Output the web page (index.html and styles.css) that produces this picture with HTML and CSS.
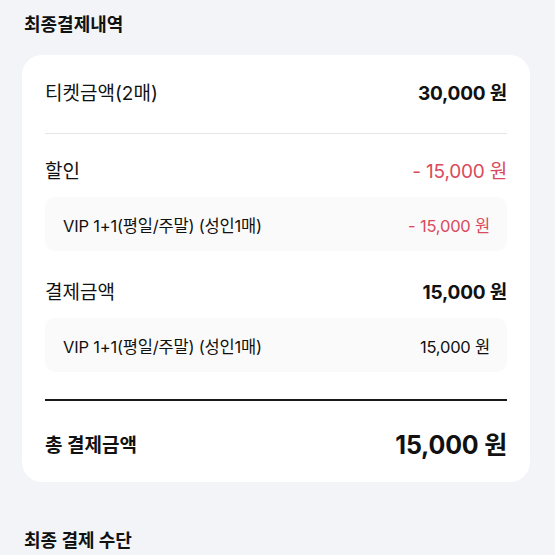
FILE: index.html
```html
<!DOCTYPE html>
<html lang="ko">
<head>
<meta charset="utf-8">
<link rel="stylesheet" href="styles.css">
</head>
<body>
<div class="page">
  <h2 class="section-title">최종결제내역</h2>
  <div class="card">
    <div class="row first">
      <span class="label">티켓금액(2매)</span>
      <span class="amount bold">30,000 원</span>
    </div>
    <div class="divider"></div>
    <div class="row">
      <span class="label">할인</span>
      <span class="amount red">- 15,000 원</span>
    </div>
    <div class="sub">
      <span>VIP 1+1(평일/주말) (성인1매)</span>
      <span class="red">- 15,000 원</span>
    </div>
    <div class="row second">
      <span class="label">결제금액</span>
      <span class="amount bold">15,000 원</span>
    </div>
    <div class="sub">
      <span>VIP 1+1(평일/주말) (성인1매)</span>
      <span>15,000 원</span>
    </div>
    <div class="divider dark"></div>
    <div class="row total">
      <span class="label">총 결제금액</span>
      <span class="amount">15,000 원</span>
    </div>
  </div>
  <h2 class="section-title bottom">최종 결제 수단</h2>
</div>
</body>
</html>
```

FILE: styles.css
```css
* { box-sizing: border-box; }
html, body {
  margin: 0;
  padding: 0;
  background: #f3f4f8;
  font-family: "Inter", "Noto Sans CJK KR", "Noto Sans", sans-serif;
  color: #111;
}
.page {
  padding: 13px 25px 0 22px;
  height: 555px;
  overflow: hidden;
}
.section-title {
  margin: 0 0 0 2px;
  font-size: 18px;
  font-weight: 700;
  line-height: 24px;
}
.section-title.bottom {
  margin-top: 47px;
}
.card {
  margin-top: 18px;
  background: #fff;
  border-radius: 20px;
  padding: 20px 23px 23px 23px;
}
.row {
  display: flex;
  justify-content: space-between;
  align-items: center;
  height: 32px;
  font-size: 19px;
}
.amount { font-size: 19px; letter-spacing: -0.2px; }
.bold { font-weight: 700; }
.red { color: #d94a5c; }
.divider {
  height: 1px;
  background: #e6e6e8;
  margin: 26px 0 19px;
}
.divider.dark {
  height: 2px;
  background: #1a1a1a;
  margin: 27px 0 26px;
}
.sub {
  margin-top: 12px;
  height: 54px;
  background: #fafafa;
  border-radius: 10px;
  display: flex;
  justify-content: space-between;
  align-items: center;
  padding: 2px 17px 0 18px;
  font-size: 16.5px;
  letter-spacing: -0.2px;
}
.row.second { margin-top: 23px; }
.row.total .label { font-weight: 700; }
.row.total .amount {
  font-size: 25px;
  font-weight: 700;
}
```
